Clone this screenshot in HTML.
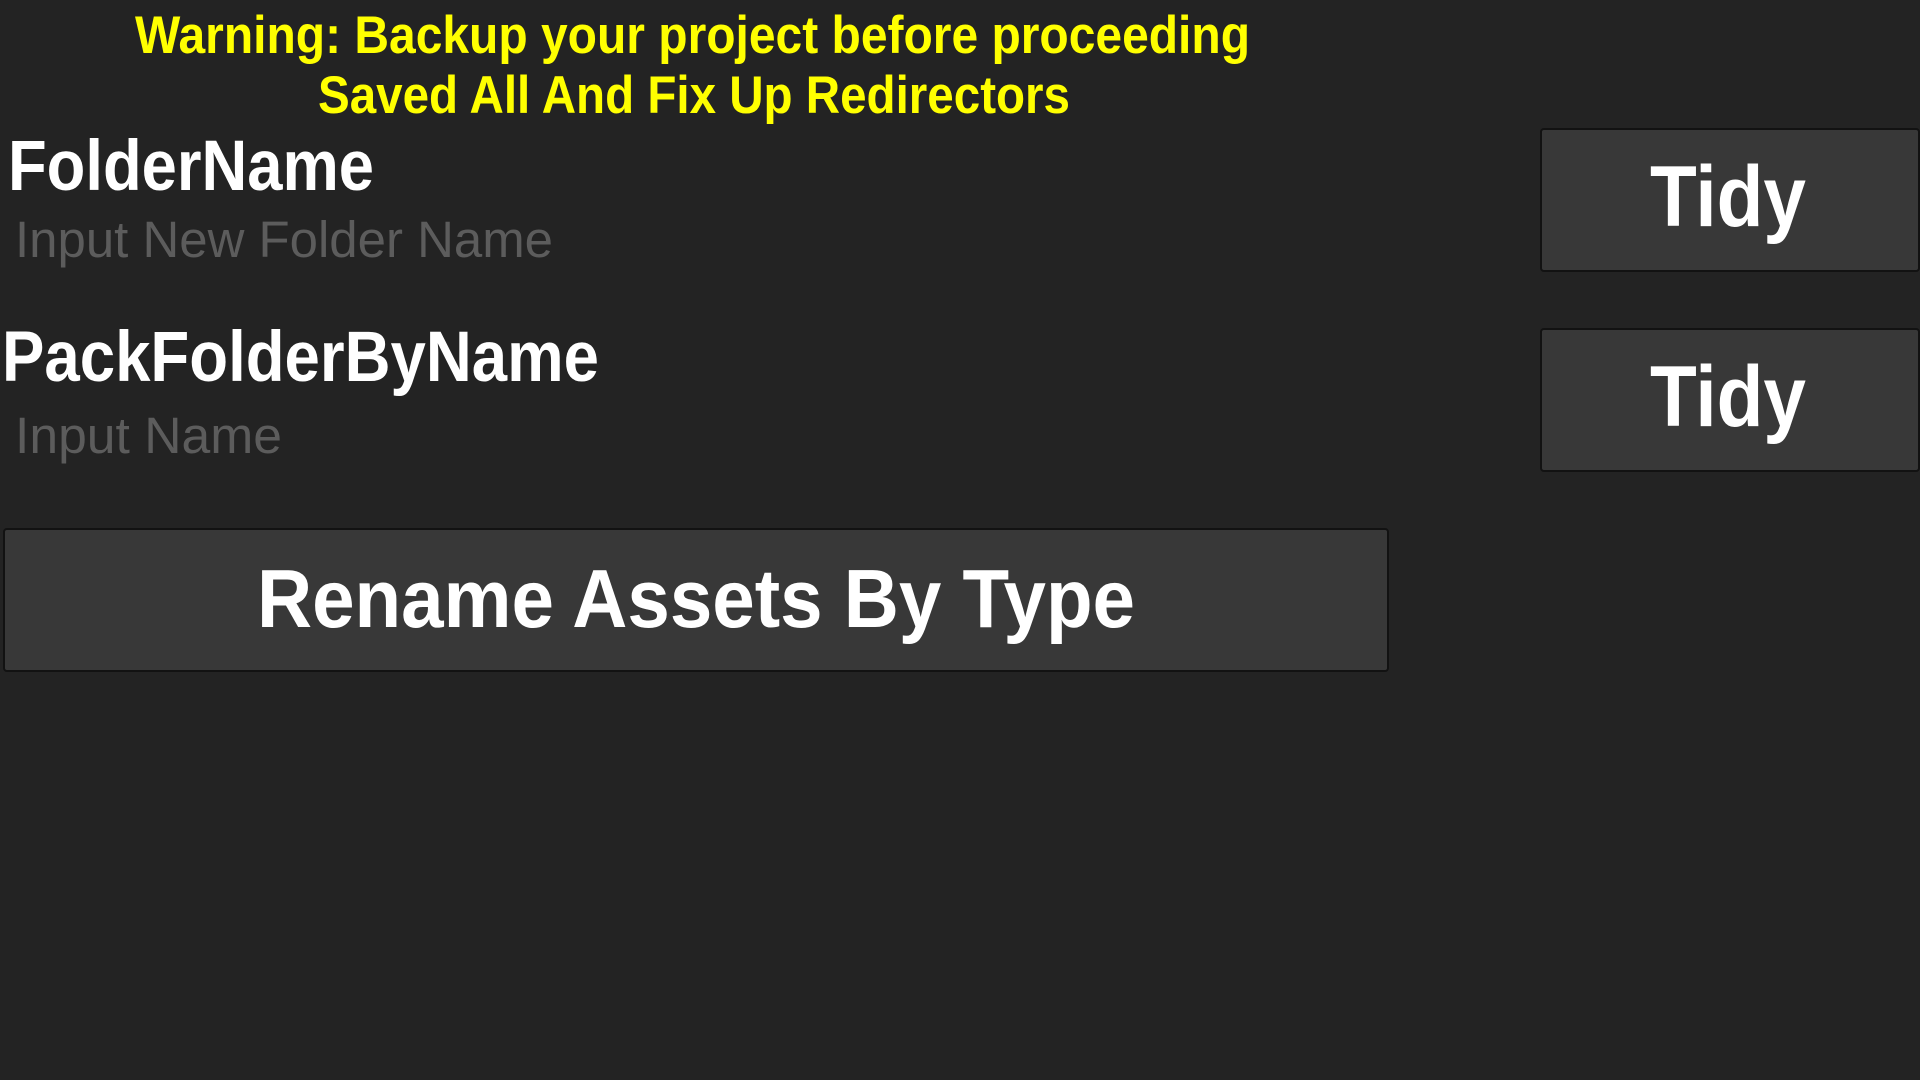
<!DOCTYPE html>
<html><head><meta charset="utf-8"><style>
html,body{margin:0;padding:0;width:1920px;height:1080px;background:#232323;overflow:hidden;font-family:"Liberation Sans",sans-serif}
.t{position:absolute;white-space:nowrap;line-height:1;transform-origin:0 0}
.b{font-weight:bold}
.btn{position:absolute;background:#383838;border:2px solid #121212;border-radius:4px;box-sizing:border-box}
</style></head><body>
<div class="btn" style="left:1540px;top:128px;width:380px;height:144px"></div>
<div class="btn" style="left:1540px;top:328px;width:380px;height:144px"></div>
<div class="btn" style="left:3px;top:528px;width:1386px;height:144px"></div>

<div class="t b" id="e0" style="color:#ffff00;font-size:53px;left:135px;top:9px">Warning: Backup your project before proceeding</div>
<div class="t b" id="e1" style="color:#ffff00;font-size:53px;left:318px;top:69px">Saved All And Fix Up Redirectors</div>
<div class="t b" id="e2" style="color:#fff;font-size:71px;left:8px;top:131px">FolderName</div>
<div class="t" id="e3" style="color:#5c5c5c;font-size:51px;left:15px;top:214px">Input New Folder Name</div>
<div class="t b" id="e4" style="color:#fff;font-size:71px;left:2px;top:322px">PackFolderByName</div>
<div class="t" id="e5" style="color:#5c5c5c;font-size:51px;left:15px;top:410px">Input Name</div>
<div class="t b" id="e6" style="color:#fff;font-size:86px;left:1650px;top:154px">Tidy</div>
<div class="t b" id="e7" style="color:#fff;font-size:86px;left:1650px;top:354px">Tidy</div>
<div class="t b" id="e8" style="color:#fff;font-size:83px;left:257px;top:557px">Rename Assets By Type</div>
<script>
var w=[1115,752,366,538,597,267,156,156,878];
for(var i=0;i<w.length;i++){var e=document.getElementById('e'+i);var r=e.getBoundingClientRect().width;e.style.transform='scaleX('+(w[i]/r)+')';}
</script>
</body></html>
